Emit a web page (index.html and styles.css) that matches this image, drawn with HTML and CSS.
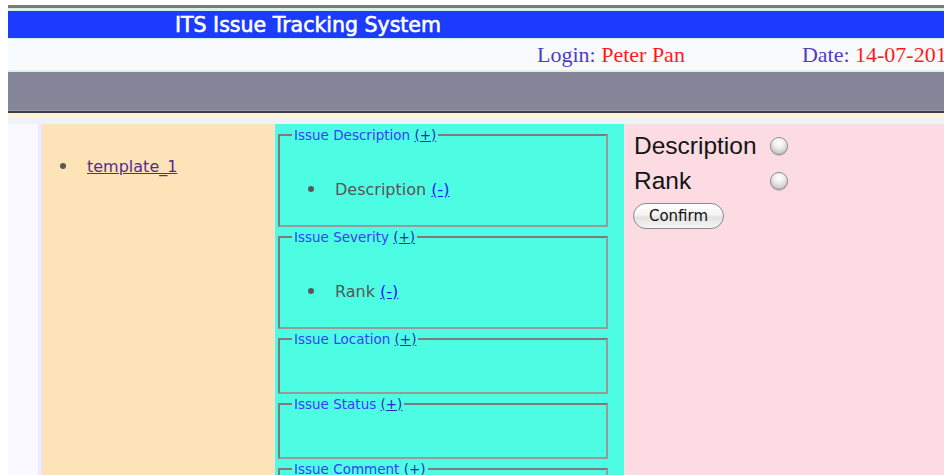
FILE: index.html
```html
<!DOCTYPE html>
<html lang="en">
<head>
<meta charset="utf-8">
<title>ITS Issue Tracking System</title>
<link rel="stylesheet" href="styles.css">
</head>
<body>
<div class="page">
  <div class="top-rule"></div>
  <header class="title-bar">
    <h1 class="title">ITS Issue Tracking System</h1>
  </header>
  <div class="user-bar">
    <span class="info login"><span class="info-label">Login:</span> <span class="info-value">Peter Pan</span></span>
    <span class="info date"><span class="info-label">Date:</span> <span class="info-value">14-07-2011</span></span>
  </div>
  <nav class="menu-bar"></nav>
  <div class="strip strip-cream"></div>
  <div class="strip strip-blue"></div>

  <main class="workspace">
    <div class="gutter"></div>

    <section class="templates">
      <ul class="dot-list">
        <li><a class="template-link" href="#">template_1</a></li>
      </ul>
    </section>

    <section class="groups">
      <fieldset class="group filled">
        <legend>Issue Description <a href="#">(+)</a></legend>
        <ul class="dot-list field-list">
          <li>Description <a href="#">(-)</a></li>
        </ul>
      </fieldset>
      <fieldset class="group filled">
        <legend>Issue Severity <a href="#">(+)</a></legend>
        <ul class="dot-list field-list">
          <li>Rank <a href="#">(-)</a></li>
        </ul>
      </fieldset>
      <fieldset class="group">
        <legend>Issue Location <a href="#">(+)</a></legend>
      </fieldset>
      <fieldset class="group">
        <legend>Issue Status <a href="#">(+)</a></legend>
      </fieldset>
      <fieldset class="group">
        <legend>Issue Comment <a href="#">(+)</a></legend>
      </fieldset>
    </section>

    <section class="chooser">
      <form class="choice-form">
        <label class="choice-label" for="opt-desc">Description</label>
        <input class="radio" type="radio" name="field" id="opt-desc">
        <label class="choice-label" for="opt-rank">Rank</label>
        <input class="radio" type="radio" name="field" id="opt-rank">
        <button class="confirm" type="button">Confirm</button>
      </form>
    </section>
  </main>
</div>
</body>
</html>
```
FILE: styles.css
```css
html, body {
  margin: 0;
  padding: 0;
  overflow: hidden;
  background: #ffffff;
}

.page {
  padding: 5px 0 0 8px;
  width: 1100px;
}

/* header bands */
.top-rule {
  height: 3px;
  background: #7a7a7a;
  border-bottom: 3px solid #d9f1e4;
}

.title-bar {
  height: 27px;
  background: #1b3cff;
  display: flex;
  align-items: center;
}

.title {
  margin: 0 0 0 167px;
  font-family: "DejaVu Sans", sans-serif;
  font-size: 20.5px;
  font-weight: normal;
  line-height: 24px;
  color: #ffffff;
  -webkit-text-stroke: 0.6px #ffffff;
}

.user-bar {
  height: 31px;
  background: #f9fafd;
  border-top: 1px solid #d5f3dc;
  border-bottom: 2px solid #dcf3df;
  display: flex;
  align-items: center;
  font-family: "Liberation Serif", serif;
  font-size: 22px;
  white-space: nowrap;
}

.info-label {
  color: #4b3ec2;
}

.info-value {
  color: #ff1a1a;
}

.login {
  margin-left: 529px;
}

.date {
  margin-left: 117px;
}

.menu-bar {
  height: 38px;
  background: #858499;
  border-bottom: 1px solid #9d9cab;
  box-shadow: 0 2px 0 #3e3e42;
}

.strip {
  height: 5px;
}

.strip-cream {
  margin-top: 2px;
  background: #fbf4db;
}

.strip-blue {
  background: #eef2fa;
  height: 6px;
}

/* main area */
.workspace {
  display: grid;
  grid-template-columns: 33px 231px 348px 1fr;
  column-gap: 2px;
  background: #fcdde3;
  min-height: 420px;
}

.gutter {
  background: #f9f9ff;
  border-right: 3px solid #e6effd;
}

.templates {
  background: #fce3b8;
  padding: 33px 0 0 44px;
}

.dot-list {
  list-style: none;
  margin: 0;
  padding: 0;
  font-family: "DejaVu Sans", sans-serif;
  font-size: 16px;
  line-height: 19px;
}

.dot-list li::before {
  content: "";
  display: inline-block;
  width: 6px;
  height: 6px;
  border-radius: 50%;
  background: #585858;
  margin: 0 21px 0 -27px;
  vertical-align: 3px;
}

.template-link {
  color: #5b2b8a;
  text-decoration: underline;
}

.groups {
  background: #4dfde3;
  padding: 2px 0 0 3px;
  margin-left: -1px;
}

.group {
  box-sizing: border-box;
  width: 330px;
  height: 101px;
  margin: 0 0 1px 0;
  padding: 0 12px;
  border: 2px solid #858585;
  border-color: #7c7c7c #9a9a9a #9a9a9a #7c7c7c;
  font-family: "DejaVu Sans", sans-serif;
}

.group:not(.filled) {
  height: 64px;
}

.group legend {
  padding: 2px 2px 0;
  font-size: 13.5px;
  line-height: 15px;
  color: #3a3cff;
}

.group legend a {
  color: #2b2bb0;
  text-decoration: underline;
}

.field-list {
  margin-top: 37px;
  padding-left: 43px;
  color: #555555;
}

.field-list a {
  color: #1a1aff;
  text-decoration: underline;
}

.chooser {
  background: #fcdbe2;
  padding: 4px 0 0 8px;
}

.choice-form {
  display: grid;
  grid-template-columns: 136px auto;
  grid-auto-rows: 35px;
  align-items: center;
  justify-content: start;
}

.choice-label {
  font-family: "Liberation Sans", sans-serif;
  font-size: 24.5px;
  color: #141414;
}

.radio {
  -webkit-appearance: none;
  appearance: none;
  box-sizing: border-box;
  width: 18px;
  height: 18px;
  margin: 0;
  border-radius: 50%;
  border: 1px solid #8b8b8b;
  background: radial-gradient(circle at 50% 30%, #ffffff 0%, #f0f0f0 35%, #c9c9c9 75%, #b0b0b0 100%);
  box-shadow: inset 0 1px 1px rgba(255, 255, 255, 0.8), 0 1px 1px rgba(0, 0, 0, 0.15);
}

.confirm {
  grid-column: 1 / span 2;
  align-self: start;
  margin: 5px 0 0 -1px;
  width: 91px;
  height: 26px;
  border-radius: 13px;
  border: 1px solid #8a8a8a;
  background: linear-gradient(#ffffff, #f4f4f4 45%, #e2e2e2 55%, #f6f6f6);
  font-family: "DejaVu Sans", sans-serif;
  font-size: 15px;
  color: #111111;
  padding: 0;
}
```
